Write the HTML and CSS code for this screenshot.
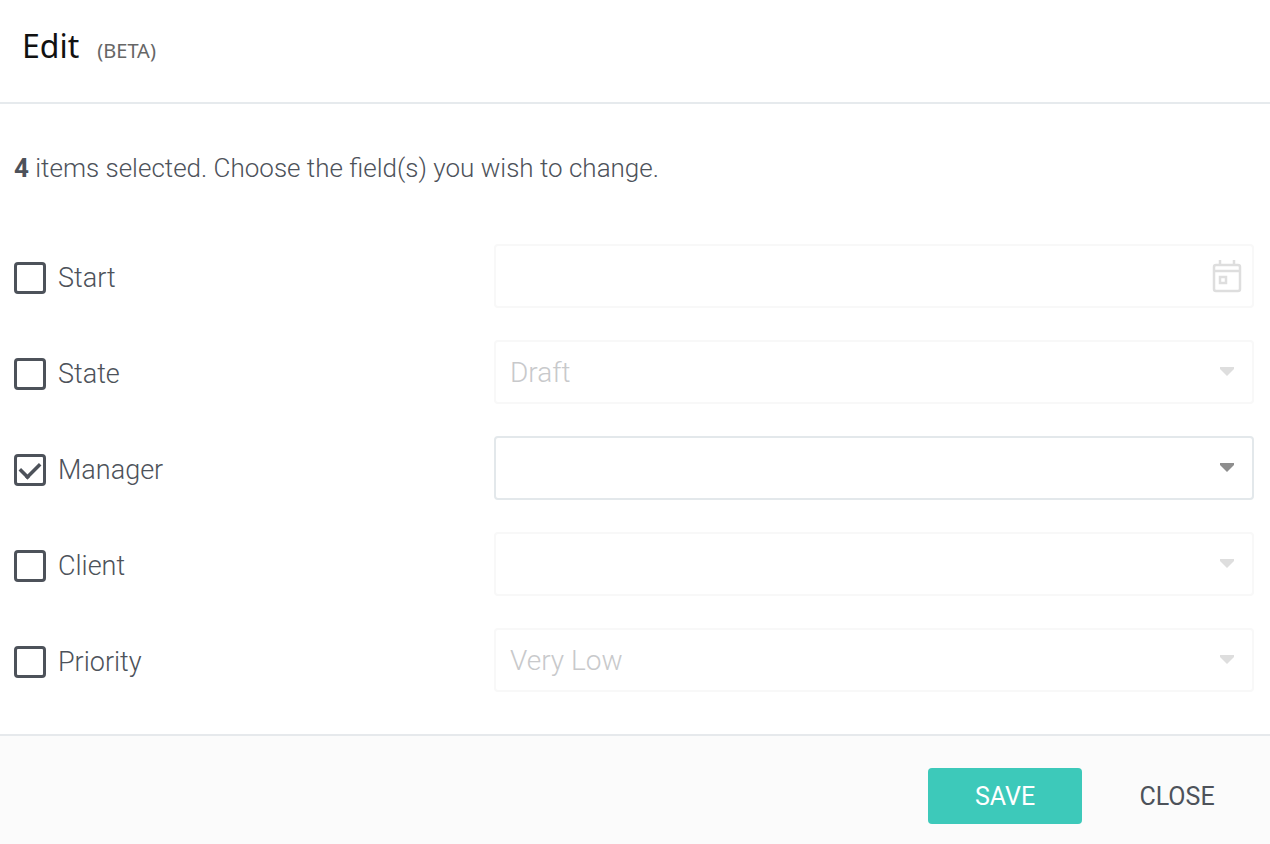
FILE: index.html
```
<!DOCTYPE html>
<html lang="en">
<head>
    <meta charset="UTF-8">
    <meta name="viewport" content="width=device-width, initial-scale=1">
    <title>Edit</title>
    <link rel="stylesheet" href="styles.css">
</head>
<body>
    <form class="dialog">
        <header class="dialog-header">
            <h1>Edit</h1>
            <span class="beta">(BETA)</span>
        </header>

        <main class="dialog-body">
            <p class="intro"><strong>4</strong> items selected. Choose the field(s) you wish to change.</p>

            <div class="row">
                <label class="check"><input type="checkbox"> Start</label>
                <div class="field disabled">
                    <input type="text" aria-label="Start value" disabled>
                    <svg class="calendar" width="30" height="34" viewBox="0 0 30 34" fill="none" stroke="currentColor" stroke-width="2.5">
                        <rect x="2" y="6" width="26" height="26" rx="2"/>
                        <path d="M2 12H28M8 1V6M22 1V6"/>
                        <rect x="8" y="18" width="6" height="6"/>
                    </svg>
                </div>
            </div>

            <div class="row">
                <label class="check"><input type="checkbox"> State</label>
                <div class="field disabled">
                    <select aria-label="State value" disabled>
                        <option>Draft</option>
                    </select>
                    <svg class="arrow" width="16" height="9" viewBox="0 0 16 9"><path d="M1 0H15V2L9 8L8 9L7 8L1 2Z" fill="currentColor"/></svg>
                </div>
            </div>

            <div class="row">
                <label class="check"><input type="checkbox" checked> Manager</label>
                <div class="field">
                    <select aria-label="Manager value">
                        <option></option>
                    </select>
                    <svg class="arrow" width="16" height="9" viewBox="0 0 16 9"><path d="M1 0H15V2L9 8L8 9L7 8L1 2Z" fill="currentColor"/></svg>
                </div>
            </div>

            <div class="row">
                <label class="check"><input type="checkbox"> Client</label>
                <div class="field disabled">
                    <select aria-label="Client value" disabled>
                        <option></option>
                    </select>
                    <svg class="arrow" width="16" height="9" viewBox="0 0 16 9"><path d="M1 0H15V2L9 8L8 9L7 8L1 2Z" fill="currentColor"/></svg>
                </div>
            </div>

            <div class="row">
                <label class="check"><input type="checkbox"> Priority</label>
                <div class="field disabled">
                    <select aria-label="Priority value" disabled>
                        <option>Very Low</option>
                    </select>
                    <svg class="arrow" width="16" height="9" viewBox="0 0 16 9"><path d="M1 0H15V2L9 8L8 9L7 8L1 2Z" fill="currentColor"/></svg>
                </div>
            </div>
        </main>

        <footer class="dialog-footer">
            <button type="submit" class="btn btn-save">SAVE</button>
            <button type="button" class="btn">CLOSE</button>
        </footer>
    </form>
</body>
</html>
```
FILE: styles.css
```
* {
    box-sizing: border-box;
}
body {
    margin: 0;
    font-family: Roboto, sans-serif;
    font-weight: 300;
    font-size: 27px;
    color: #4d525a;
    background: #fff;
}
.dialog {
    display: flex;
    flex-direction: column;
    min-height: 100vh;
}
.dialog-header {
    display: flex;
    align-items: baseline;
    gap: 18px;
    padding: 24px 22px 34px;
    border-bottom: 2px solid #e6eaed;
    font-family: "Noto Sans", sans-serif;
    font-weight: 400;
}
h1 {
    margin: 0;
    font-size: 32px;
    line-height: 44px;
    font-weight: 400;
    color: #111;
}
.beta {
    font-size: 20px;
    color: #666;
}
.dialog-body {
    flex: 1;
    display: flex;
    flex-direction: column;
    gap: 32px;
    padding: 46px 16px 42px 14px;
}
.intro {
    margin: 0 0 26px;
    font-size: 26px;
    line-height: 36px;
}
.intro strong {
    font-weight: 700;
}
.row {
    display: grid;
    grid-template-columns: 12fr 19fr;
    align-items: center;
}
.check {
    display: flex;
    align-items: center;
    gap: 12px;
    padding-top: 4px;
    line-height: 32px;
}
.check input {
    appearance: none;
    display: grid;
    place-items: center;
    width: 32px;
    height: 32px;
    margin: 0;
    border: 3px solid #4d525a;
    border-radius: 4px;
}
.check input:checked::after {
    content: "";
    width: 10px;
    height: 18px;
    margin-bottom: 6px;
    border: solid #4d525a;
    border-width: 0 4px 4px 0;
    transform: rotate(45deg) scale(0.9);
}
.field {
    position: relative;
    color: #8e8e8e;
}
.field input,
.field select {
    appearance: none;
    display: block;
    width: 100%;
    height: 64px;
    padding: 0 48px 0 14px;
    border: 2px solid #e3e8eb;
    border-radius: 4px;
    background: #fff;
    font: inherit;
    font-size: 28px;
    color: #4d525a;
}
.field.disabled {
    color: #dedede;
}
.field.disabled input,
.field.disabled select {
    border-color: #f8f8f8;
    color: #c8c9cb;
    opacity: 1;
}
.arrow,
.calendar {
    position: absolute;
    pointer-events: none;
}
.arrow {
    top: 27px;
    right: 19px;
}
.calendar {
    top: 15px;
    right: 12px;
}
.dialog-footer {
    display: flex;
    justify-content: flex-end;
    gap: 18px;
    padding: 32px 16px 20px;
    border-top: 2px solid #e6e9ec;
    background: #fbfbfb;
}
.btn {
    min-width: 154px;
    height: 56px;
    padding: 0 16px;
    border: 0;
    border-radius: 4px;
    background: none;
    font-family: inherit;
    font-size: 25px;
    font-weight: 400;
    color: #4d525a;
    cursor: pointer;
}
.btn-save {
    background: #3dc9ba;
    color: #fff;
}
```
